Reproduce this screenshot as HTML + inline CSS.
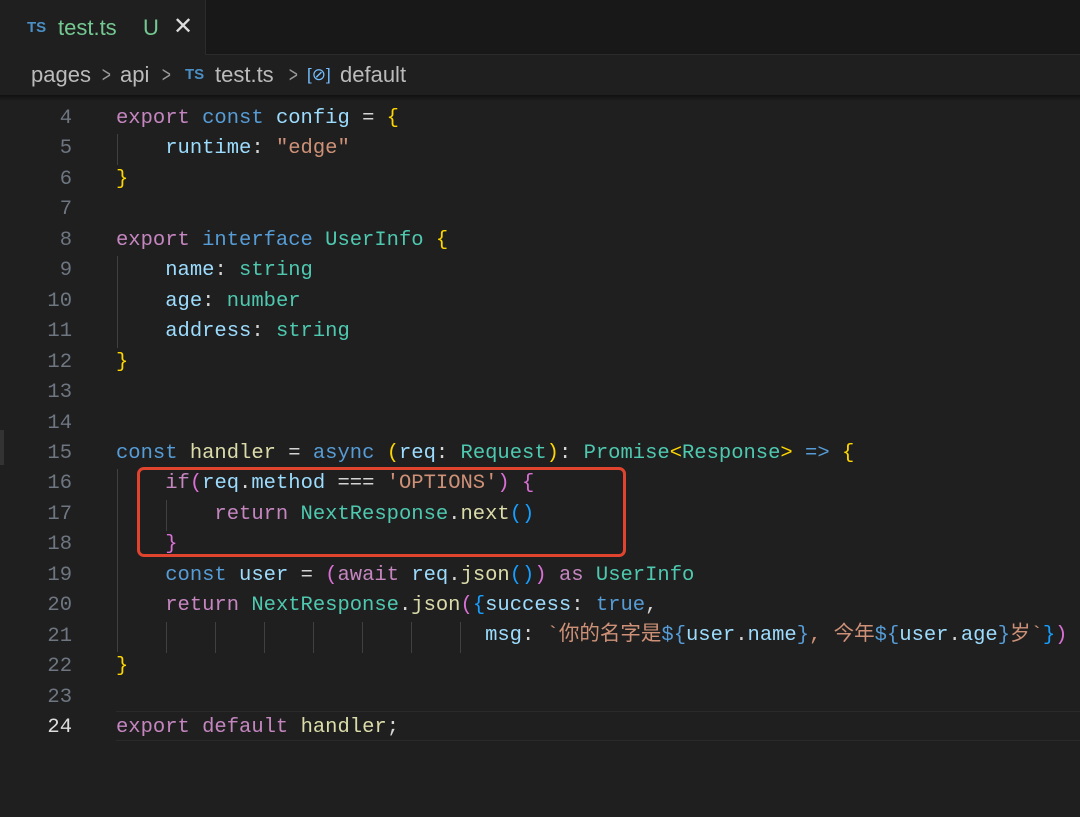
<!DOCTYPE html>
<html><head><meta charset="utf-8"><style>
body{margin:0;width:1080px;height:817px;background:#1f1f1f;overflow:hidden;font-family:"Liberation Mono","Noto Sans CJK SC",monospace;position:relative}
.tabbar{position:absolute;left:0;top:0;width:1080px;height:54px;background:#181818;border-bottom:1px solid #2b2b2b}
.tab{position:absolute;left:0;top:0;width:205px;height:55px;background:#1f1f1f;border-right:1px solid #2b2b2b;font-family:"Liberation Sans",sans-serif}
.crumb{position:absolute;top:0;left:0;font:22px "Liberation Sans",sans-serif;color:#bbb;white-space:pre}
.crumb span{position:absolute;top:62px}
.ed{position:absolute;left:0;top:104px;width:1080px}
.ln{position:absolute;left:0;width:72px;text-align:right;color:#6e7681;font-size:20.5px;line-height:30.45px}
.code{position:absolute;left:116px;font-size:20.5px;line-height:30.45px;color:#d4d4d4}
.l{height:30.45px;white-space:pre}
.k{color:#569cd6}.p{color:#c586c0}.v{color:#9cdcfe}.t{color:#4ec9b0}.s{color:#ce9178}.f{color:#dcdcaa}.y{color:#ffd700}.m{color:#da70d6}.b{color:#179fff}
.g{position:absolute;width:1px;background:#404040}
</style></head><body>
<div class="tabbar"></div>
<div class="tab"><span style="position:absolute;left:27px;top:19px;font-size:15px;font-weight:bold;color:#4a8fc5">TS</span><span style="position:absolute;left:58px;top:15px;font-size:22px;color:#73c991">test.ts</span><span style="position:absolute;left:143px;top:15px;font-size:22px;color:#73c991">U</span><span style="position:absolute;left:173px;top:12px;font-size:24px;color:#ddd">✕</span></div>
<div class="crumb">
<span style="left:31px">pages</span>
<span style="left:100px;color:#999;transform:scaleX(.7)">&gt;</span>
<span style="left:120px">api</span>
<span style="left:160px;color:#999;transform:scaleX(.7)">&gt;</span>
<span style="left:185px;top:66px;color:#4a8fc5;font-size:15px;font-weight:bold">TS</span>
<span style="left:215px">test.ts</span>
<span style="left:287px;color:#999;transform:scaleX(.7)">&gt;</span>
<span style="left:307px;top:65px;color:#75beff;font-size:17px">[⊘]</span>
<span style="left:340px">default</span>
</div>
<div style="position:absolute;left:0;top:95px;width:1080px;height:6px;background:linear-gradient(#111,#1f1f1f)"></div>
<div style="position:absolute;left:0;top:430px;width:4px;height:35px;background:#333"></div>
<div class="ed">
<div class="ln">4<br>5<br>6<br>7<br>8<br>9<br>10<br>11<br>12<br>13<br>14<br>15<br>16<br>17<br>18<br>19<br>20<br>21<br>22<br>23<br><span style="color:#ddd">24</span></div>
<div class="g" style="left:117px;top:30px;height:31px"></div>
<div class="g" style="left:117px;top:152px;height:92px"></div>
<div class="g" style="left:117px;top:365px;height:183px"></div>
<div class="g" style="left:166px;top:396px;height:31px"></div>
<div class="g" style="left:166px;top:518px;height:31px"></div><div class="g" style="left:215px;top:518px;height:31px"></div><div class="g" style="left:264px;top:518px;height:31px"></div><div class="g" style="left:313px;top:518px;height:31px"></div><div class="g" style="left:362px;top:518px;height:31px"></div><div class="g" style="left:411px;top:518px;height:31px"></div><div class="g" style="left:460px;top:518px;height:31px"></div>
<div style="position:absolute;left:116px;top:607px;width:964px;height:28px;border-top:1px solid #2a2a2a;border-bottom:1px solid #2a2a2a"></div>
<div class="code">
<div class="l"><span class="p">export</span> <span class="k">const</span> <span class="v">config</span> = <span class="y">{</span></div>
<div class="l">    <span class="v">runtime</span>: <span class="s">"edge"</span></div>
<div class="l"><span class="y">}</span></div>
<div class="l"></div>
<div class="l"><span class="p">export</span> <span class="k">interface</span> <span class="t">UserInfo</span> <span class="y">{</span></div>
<div class="l">    <span class="v">name</span>: <span class="t">string</span></div>
<div class="l">    <span class="v">age</span>: <span class="t">number</span></div>
<div class="l">    <span class="v">address</span>: <span class="t">string</span></div>
<div class="l"><span class="y">}</span></div>
<div class="l"></div>
<div class="l"></div>
<div class="l"><span class="k">const</span> <span class="f">handler</span> = <span class="k">async</span> <span class="y">(</span><span class="v">req</span>: <span class="t">Request</span><span class="y">)</span>: <span class="t">Promise</span><span class="y">&lt;</span><span class="t">Response</span><span class="y">&gt;</span> <span class="k">=&gt;</span> <span class="y">{</span></div>
<div class="l">    <span class="p">if</span><span class="m">(</span><span class="v">req</span>.<span class="v">method</span> === <span class="s">'OPTIONS'</span><span class="m">)</span> <span class="m">{</span></div>
<div class="l">        <span class="p">return</span> <span class="t">NextResponse</span>.<span class="f">next</span><span class="b">()</span></div>
<div class="l">    <span class="m">}</span></div>
<div class="l">    <span class="k">const</span> <span class="v">user</span> = <span class="m">(</span><span class="p">await</span> <span class="v">req</span>.<span class="f">json</span><span class="b">()</span><span class="m">)</span> <span class="p">as</span> <span class="t">UserInfo</span></div>
<div class="l">    <span class="p">return</span> <span class="t">NextResponse</span>.<span class="f">json</span><span class="m">(</span><span class="b">{</span><span class="v">success</span>: <span class="k">true</span>,</div>
<div class="l">                              <span class="v">msg</span>: <span class="s">`你的名字是</span><span class="k">${</span><span class="v">user</span>.<span class="v">name</span><span class="k">}</span><span class="s">, 今年</span><span class="k">${</span><span class="v">user</span>.<span class="v">age</span><span class="k">}</span><span class="s">岁`</span><span class="b">}</span><span class="m">)</span></div>
<div class="l"><span class="y">}</span></div>
<div class="l"></div>
<div class="l"><span class="p">export</span> <span class="p">default</span> <span class="f">handler</span>;</div>
</div>
</div>
<div style="position:absolute;left:137px;top:467px;width:483px;height:84px;border:3px solid #e0442f;border-radius:7px"></div>
</body></html>
